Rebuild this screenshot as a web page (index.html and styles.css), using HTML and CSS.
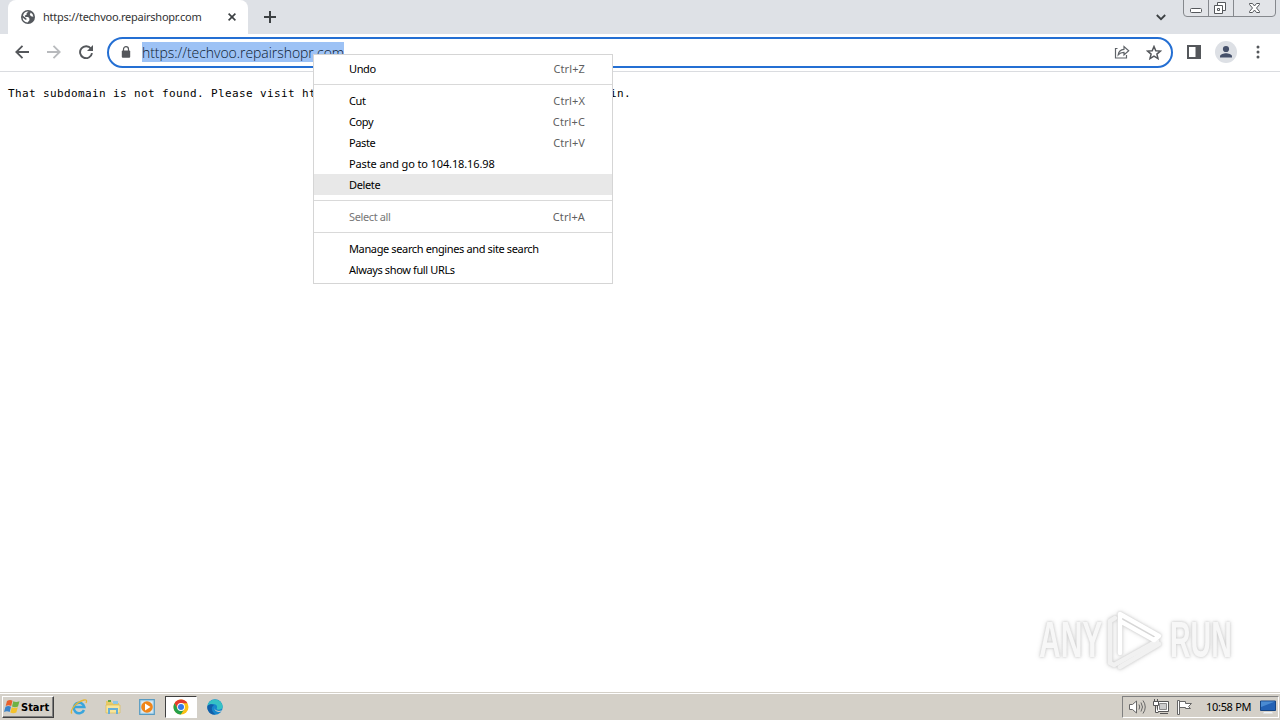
FILE: index.html
```html
<!DOCTYPE html>
<html>
	<head>
		<meta charset="UTF-8">
		<title>https://techvoo.repairshopr.com</title>
		<link rel="stylesheet" href="styles.css">
	</head>
	<body>
		<div class="desktop">
			<div class="tabs">
				<div class="tab">
					<svg class="globe" width="14" height="14" viewBox="0 0 14 14">
						<circle cx="7" cy="7" r="7" fill="#54585d"/>
						<path d="M7.5 1.6 5.6 3.3v1.5L3.8 5.6l.5 1.5h2.9l1.2 1.5v1.6L6.6 12.4A5.5 5.5 0 0 1 1.6 7.4L4.3 9.7l1.2.1V8.6L2 5.7A5.4 5.4 0 0 1 7.5 1.6z" fill="#fff"/>
						<path d="M9.7 2.5 8.8 4.7 10 6.2l2.4.6A5.5 5.5 0 0 0 9.7 2.5z" fill="#fff"/>
					</svg>
					<span class="tab-title">https://techvoo.repairshopr.com</span>
					<svg class="tab-close" width="8" height="8" viewBox="0 0 8 8"><path d="M.6.6l6.8 6.8M7.4.6L.6 7.4" stroke="#3c4043" stroke-width="1.6"/></svg>
				</div>
				<svg class="plus" width="12" height="12" viewBox="0 0 12 12"><path d="M6 0v12M0 6h12" stroke="#3c4043" stroke-width="2"/></svg>
				<svg class="chevron" width="10" height="7" viewBox="0 0 10 7"><path d="M.8 1l4.2 4.2L9.2 1" fill="none" stroke="#3c4043" stroke-width="1.8"/></svg>
				<svg class="winbtns" width="94" height="17" viewBox="0 0 94 17">
					<path d="M.5 0v13q0 3.500 3.500 3.500h85q3.500 0 3.500-3.500V0M25.500 0v16.500M50.500 0v16.500" fill="#e2e4e8" stroke="#85888d"/>
					<rect x="7.500" y="8.500" width="11" height="4" rx="1" fill="#fff" stroke="#55585c"/>
					<path d="M34.500 2.500h8v8h-8z" fill="#fff" stroke="#55585c"/>
					<path d="M31.500 5.500h8v8h-8zM34.500 8.500h2v2h-2z" fill="#fff" stroke="#55585c"/>
					<path d="M66.500 3.500h3l2 2.500 2-2.500h3v1L73.500 8l3 3.500v1h-3l-2-2.500-2 2.500h-3v-1l3-3.500-3-3.500z" fill="#fff" stroke="#55585c"/>
				</svg>
			</div>
			<div class="toolbar">
				<svg class="back" width="14" height="14" viewBox="0 0 14 14"><path d="M14 7H1.500M7.500.8L1.300 7l6.200 6.200" fill="none" stroke="#54575b" stroke-width="1.800"/></svg>
				<svg class="forward" width="14" height="14" viewBox="0 0 14 14"><path d="M0 7h12.500M6.500.8L12.700 7l-6.200 6.200" fill="none" stroke="#b8babd" stroke-width="1.800"/></svg>
				<svg class="reload" width="14" height="14" viewBox="0 0 14 14"><path d="M12 3.800A6 6 0 1 0 13 8.200" fill="none" stroke="#54575b" stroke-width="1.900"/><path d="M14 0v6H8z" fill="#54575b"/></svg>
				<div class="omnibox">
					<svg class="lock" width="10" height="12" viewBox="0 0 10 12"><path d="M2.500 5V3.200a2.500 2.500 0 0 1 5 0V5" fill="none" stroke="#54575b" stroke-width="1.200"/><rect x=".8" y="4.500" width="8.400" height="7.300" rx="1" fill="#54575b"/></svg>
					<span class="url">https://techvoo.repairshopr.com</span>
					<svg class="share" width="16" height="14" viewBox="0 0 16 14"><path d="M3.500 3.500H1.500v9.500h11v-3M4.200 9.800c.4-3.400 2.400-5.300 5.800-5.500V1.500l4.700 4.300L10 10V7.300C7.400 7.300 5.700 8 4.200 9.800z" fill="none" stroke="#5f6368" stroke-width="1.200"/></svg>
					<svg class="star" width="16" height="15" viewBox="0 0 16 15"><path d="M8 1.500l1.800 4.200 4.600.4-3.500 3 1.100 4.500L8 11.200l-4 2.400 1.100-4.500-3.500-3 4.600-.4z" fill="none" stroke="#54575b" stroke-width="1.500"/></svg>
				</div>
				<svg class="panel" width="14" height="14" viewBox="0 0 14 14"><path d="M1 1h12v12H1z" fill="#fff" stroke="#54575b" stroke-width="2"/><path d="M8.500 0H14v14H8.500z" fill="#54575b"/></svg>
				<svg class="avatar" width="22" height="22" viewBox="0 0 22 22"><circle cx="11" cy="11" r="11" fill="#dde0e5"/><circle cx="11" cy="8" r="3.100" fill="#45506a"/><path d="M5 16.500v-1.300c0-2 4-3 6-3s6 1 6 3v1.300z" fill="#45506a"/></svg>
				<svg class="dots" width="4" height="14" viewBox="0 0 4 14"><g fill="#54575b"><circle cx="2" cy="2" r="1.500"/><circle cx="2" cy="7" r="1.500"/><circle cx="2" cy="12" r="1.500"/></g></svg>
			</div>
			<div class="page">
				<div class="message">
					<span class="message-start">That subdomain is not found. Please visit ht</span>
					<span>in.</span>
				</div>
				<div class="watermark">
					<span class="wm-any">ANY</span>
					<svg class="wm-logo" width="60" height="66" viewBox="0 0 60 66">
						<g fill="none" stroke-linejoin="round" stroke-linecap="round" stroke-width="4.500">
							<path d="M9 11l-5 3v42l4 2 43-24" stroke="#f1f1f1"/>
							<path d="M14 60l39-23" stroke="#f1f1f1"/>
							<path d="M14 46V7l39 22-5 4-34-19" stroke="#fff"/>
						</g>
					</svg>
					<span class="wm-run">RUN</span>
				</div>
			</div>
			<div class="taskbar">
				<div class="start">
					<svg width="17" height="16" viewBox="0 0 17 16">
						<path d="M3 2q3-2 5.500-.3L7.200 7Q4.500 5.600 1.700 7z" fill="#e9602b"/>
						<path d="M9.300 2.200q2.700 1.500 6.200 0L14 7.500q-3 1.500-6 0z" fill="#6fb244"/>
						<path d="M1.500 7.800q3-1.500 5.500 0L5.700 13Q3 11.500 0 13z" fill="#3b83c9"/>
						<path d="M7.800 8.300q3 1.500 6 0l-1.500 5.300q-3 1.500-6 0z" fill="#f4c22c"/>
					</svg>
					<span>Start</span>
				</div>
				<div class="task">
					<svg width="18" height="18" viewBox="0 0 18 18"><path d="M14 12A5.300 5.300 0 1 1 14.300 9H5" fill="none" stroke="#39a5dc" stroke-width="2.500"/><path d="M2 15.500C-1 13 6 4 14 2c3-.5 3 1 2 3" fill="none" stroke="#e5b636" stroke-width="1.300"/></svg>
				</div>
				<div class="task">
					<svg width="16" height="16" viewBox="0 0 16 16"><path d="M1 2h5l1 2h7v9H1z" fill="#e8c965"/><path d="M3 1h3v2H3z" fill="#62a744"/><path d="M8 2h5v3H8z" fill="#8ec7e5"/><path d="M1 6h14v8H1z" fill="#f8e59a" stroke="#dabb58" stroke-width=".7"/><path d="M4 15v-5h8v5" fill="none" stroke="#67afd6" stroke-width="2"/></svg>
				</div>
				<div class="task">
					<svg width="16" height="16" viewBox="0 0 16 16"><path d="M.7.700h14.600v14.600H.7z" fill="#b9dcef" stroke="#579bc2" stroke-width="1.200"/><path d="M2.500 2.500h11v11h-11z" fill="#e4edf1"/><circle cx="8" cy="8" r="5.800" fill="#ef8519"/><path d="M6 4.500L11.500 8 6 11.500z" fill="#fff"/></svg>
				</div>
				<div class="task active">
					<svg width="16" height="16" viewBox="0 0 16 16"><circle cx="8" cy="8" r="7.500" fill="#fbc116"/><path d="M1.500 4.200A7.500 7.500 0 0 1 14.500 4.200H8L4.700 10z" fill="#e33b2e"/><path d="M1.500 4.200A7.500 7.500 0 0 0 7.800 15.500L11.300 9.900 8 11.500 4.700 9.900z" fill="#25a04b"/><circle cx="8" cy="8" r="3.900" fill="#fff"/><circle cx="8" cy="8" r="3" fill="#3579e8"/></svg>
				</div>
				<div class="task">
					<svg width="16" height="16" viewBox="0 0 16 16"><circle cx="8" cy="8" r="7.700" fill="#1686cc"/><path d="M.4 7A7.700 7.700 0 0 1 15.600 7c.5 4-5 4.500-6 3 1.500-3-.5-5-3.500-5C3 5 1 6 .4 7z" fill="#35c2c5"/><path d="M7 6c-4 3-2 7 1.500 9.500C2 16-.5 10 .5 7 2 5 5 4.500 7 6z" fill="#115fa9"/><path d="M8 7.500c-1.500 3 1.500 5.500 7 4l-.4.8C11 14 6 12 8 7.500z" fill="#d6d3cc"/></svg>
				</div>
				<div class="tray">
					<svg class="speaker" width="17" height="16" viewBox="0 0 17 16"><g fill="none" stroke="#666"><path d="M.5 5.500h3L7.500 2v12L3.500 10.500h-3z" fill="#fff"/><path d="M10 5.500q1.500 2.500 0 5M12 3.500q3 4.500 0 9M14 1.500q4.500 6.500 0 13"/></g></svg>
					<svg class="network" width="17" height="16" viewBox="0 0 17 16"><g stroke="#555"><path d="M4.500 2.500h11v10h-11z" fill="#fff"/><path d="M6.500 4.500h7v6h-7z" fill="#ccc" stroke="#888"/><path d="M7 14.500h8M1.500 0v3M4.500 0v3M.5 2.500h5v4h-5zM2.500 7v6.500h3" fill="#fff"/></g></svg>
					<svg class="flag" width="16" height="16" viewBox="0 0 16 16"><path d="M2.500 15.500h-2V1.500h2zM2.500 2.500h6v2h6l-3 3 2 2h-5v-1h-6z" fill="#fff" stroke="#666"/></svg>
					<span class="clock">10:58 PM</span>
					<svg class="monitor" width="16" height="14" viewBox="0 0 16 14"><path d="M.5 1h15v9.500H.5z" fill="#2362b5" stroke="#174582"/><path d="M1 1.500h14L1 7z" fill="#4a8bd2"/><path d="M4 12h8l1 1.500H3z" fill="#eef3f8"/></svg>
				</div>
			</div>

			<div class="menu">
				<div class="item"><span>Undo</span><span class="key">Ctrl+Z</span></div>
				<div class="line"></div>
				<div class="item"><span>Cut</span><span class="key">Ctrl+X</span></div>
				<div class="item"><span>Copy</span><span class="key">Ctrl+C</span></div>
				<div class="item"><span>Paste</span><span class="key">Ctrl+V</span></div>
				<div class="item"><span class="paste-go">Paste and go to 104.18.16.98</span></div>
				<div class="item hover"><span>Delete</span></div>
				<div class="line"></div>
				<div class="item disabled"><span>Select all</span><span class="key">Ctrl+A</span></div>
				<div class="line"></div>
				<div class="item"><span>Manage search engines and site search</span></div>
				<div class="item"><span>Always show full URLs</span></div>
			</div>
		</div>
	</body>
</html>
```
FILE: styles.css
```css
*{
	box-sizing: border-box;
}
body{
	margin: 0;
	font-family: "Noto Sans", "DejaVu Sans", sans-serif;
	font-size: 11px;
	color: #000;
}
svg{
	display: block;
	flex: none;
}
.desktop{
	position: relative;
	display: flex;
	flex-direction: column;
	width: 1280px;
	height: 720px;
	overflow: hidden;
	background: #fff;
}
.tabs{
	display: flex;
	align-items: center;
	height: 34px;
	padding-left: 8px;
	background: #dee1e6;
}
.tab{
	display: flex;
	align-items: center;
	width: 240px;
	height: 34px;
	padding: 0 12px 0 13px;
	border-radius: 8px 8px 0 0;
	background: #fff;
}
.tab-title{
	flex: 1;
	margin-left: 8px;
	padding-bottom: 2px;
	letter-spacing: -0.25px;
	white-space: nowrap;
	color: #333;
}
.plus{
	margin-left: 16px;
}
.chevron{
	margin-left: auto;
}
.winbtns{
	align-self: flex-start;
	margin: 0 3px 0 17px;
}
.toolbar{
	display: flex;
	align-items: center;
	height: 38px;
	padding: 0 20px 1px 15px;
	border-bottom: 1px solid #dadce0;
}
.forward{
	margin-left: 18px;
}
.reload{
	margin-left: 18px;
}
.omnibox{
	display: flex;
	align-items: center;
	width: 1066px;
	height: 31px;
	margin-left: 14px;
	padding: 0 9px 0 12px;
	border: 2px solid #246fd3;
	border-radius: 16px;
}
.url{
	width: 202px;
	height: 20px;
	margin-left: 11px;
	padding-top: 1px;
	font-family: "Open Sans", "Noto Sans", sans-serif;
	font-size: 14px;
	font-weight: 300;
	line-height: 20px;
	letter-spacing: -0.05px;
	white-space: nowrap;
	color: #0c1a30;
	background: #9dc2f5;
}
.share{
	margin-left: auto;
}
.star{
	margin-left: 16px;
}
.panel{
	margin-left: 14px;
}
.avatar{
	margin-left: 14px;
}
.dots{
	margin-left: auto;
}
.page{
	flex: 1;
	display: flex;
	flex-direction: column;
	justify-content: space-between;
	padding: 14px 47px 19px 8px;
}
.message{
	display: flex;
	font-family: "DejaVu Sans Mono", monospace;
	font-size: 11px;
	line-height: 16px;
	letter-spacing: 0.378px;
}
.message-start{
	width: 602px;
}
.watermark{
	display: flex;
	align-items: center;
	align-self: flex-end;
	gap: 4px;
	font-family: "Liberation Sans", sans-serif;
	font-size: 50px;
	font-weight: bold;
	line-height: 66px;
	filter: drop-shadow(0 0 1px #ccc) drop-shadow(0 0 2px #ddd);
}
.wm-any, .wm-run{
	display: block;
	width: 63px;
	height: 66px;
	transform: scaleX(0.6);
	transform-origin: left;
	color: #f7f7f7;
}
.wm-run{
	transform: scaleX(0.57);
}
.taskbar{
	display: flex;
	align-items: center;
	height: 28px;
	padding: 1px 1px 0 2px;
	border-top: 1px solid #d4d0c8;
	background: #d4d0c8;
	box-shadow: inset 0 1px #fff;
}
.start{
	display: flex;
	align-items: center;
	width: 52px;
	height: 22px;
	margin-right: 9px;
	padding-left: 1px;
	border: 1px solid;
	border-color: #fff #404040 #404040 #fff;
	box-shadow: inset -1px -1px #808080;
	font-family: "DejaVu Sans Condensed", "DejaVu Sans", sans-serif;
	font-weight: bold;
	font-size: 11px;
	letter-spacing: 0;
}
.task{
	display: flex;
	align-items: center;
	justify-content: center;
	width: 32px;
	height: 22px;
	margin-right: 2px;
}
.active{
	border: 1px solid;
	border-color: #404040 #fff #fff #404040;
	background: #fff;
}
.tray{
	display: flex;
	align-items: center;
	width: 157px;
	height: 22px;
	margin-left: auto;
	padding-left: 6px;
	border: 1px solid;
	border-color: #808080 #fff #fff #808080;
}
.network, .flag{
	margin-left: 7px;
}
.clock{
	width: 46px;
	margin-left: 13px;
	padding-bottom: 2px;
	letter-spacing: -0.3px;
	white-space: nowrap;
}
.monitor{
	margin-left: 8px;
}
.menu{
	position: absolute;
	left: 313px;
	top: 54px;
	width: 300px;
	height: 230px;
	padding: 3px 0;
	border: 1px solid #d5d5d5;
	background: #fff;
}
.item{
	display: flex;
	justify-content: space-between;
	height: 21px;
	padding: 0 27px 0 35px;
	line-height: 21px;
	letter-spacing: -0.37px;
	white-space: nowrap;
}
.paste-go{
	letter-spacing: -0.12px;
}
.key{
	letter-spacing: 0.1px;
	color: #5f5f5f;
}
.hover{
	background: #e8e8e8;
}
.disabled{
	color: #777;
}
.line{
	height: 1px;
	margin: 5px 0;
	background: #d9d9d9;
}
```
